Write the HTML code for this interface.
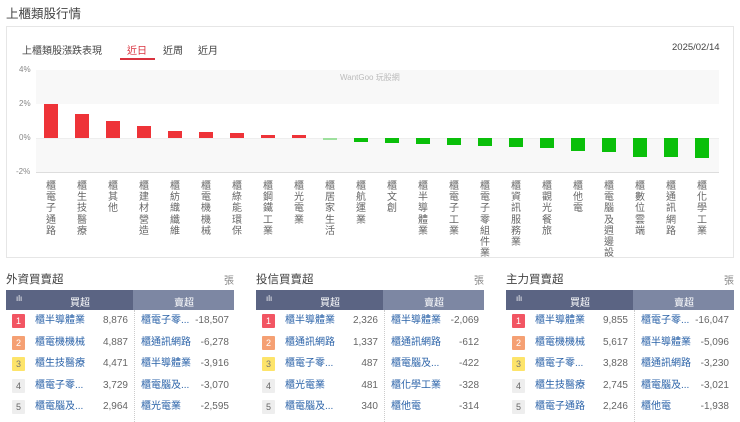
<!DOCTYPE html>
<html><head><meta charset="utf-8"><style>
*{margin:0;padding:0;box-sizing:border-box}
body{width:740px;height:422px;background:#fff;font-family:"Liberation Sans","Noto Sans CJK TC",sans-serif;position:relative;overflow:hidden;color:#333}
.abs{position:absolute}
.card{left:6px;top:26px;width:728px;height:232px;border:1px solid #e6e6e6;background:#fff}
.lbl{position:absolute;top:181px;width:12px;font-size:10px;line-height:11.2px;color:#666;text-align:center;word-break:break-all}
.ttl{font-size:11.5px;color:#444}
.panel{position:absolute;top:270px;width:228px;height:152px}
.panel .h{position:absolute;top:20px;height:20px;left:0;width:228px}
.row{position:absolute;left:0;width:228px;height:21.5px;font-size:10px;line-height:21.5px}
.rk{position:absolute;left:6px;top:4px;width:13px;height:14px;font-size:9px;line-height:14px;text-align:center;color:#fff;border-radius:1px}
.n1{position:absolute;left:29px;color:#2a62a8}
.v1{position:absolute;right:106px;color:#666}
.n2{position:absolute;left:135px;color:#2a62a8}
.v2{position:absolute;right:5px;color:#666}
.sep{position:absolute;left:128px;top:40px;width:0;height:112px;border-left:1px dotted #ccc}
</style></head><body>
<div class="abs" style="left:6px;top:3px;font-size:12.5px;color:#444">上櫃類股行情</div>
<div class="abs card"></div>
<div class="abs" style="left:22px;top:42px;font-size:10px;color:#444">上櫃類股漲跌表現</div>
<div class="abs" style="left:127px;top:42px;font-size:10px;color:#d9333f">近日</div>
<div class="abs" style="left:120px;top:58px;width:35px;height:2px;background:#d9333f"></div>
<div class="abs" style="left:163px;top:42px;font-size:10px;color:#444">近周</div>
<div class="abs" style="left:198px;top:42px;font-size:10px;color:#444">近月</div>
<div class="abs" style="left:672px;top:42px;font-size:9.5px;color:#444">2025/02/14</div>
<div class="abs" style="left:36px;top:70px;width:683px;height:34px;background:#f8f8f8"></div>
<div class="abs" style="left:36px;top:138px;width:683px;height:34px;background:#f8f8f8"></div>
<div class="abs" style="left:36px;top:172px;width:683px;height:1px;background:#ddd"></div>
<div class="abs" style="left:36px;top:138px;width:683px;height:1px;background:#eee"></div>
<div class="abs" style="left:19px;top:65px;font-size:8px;color:#888">4%</div>
<div class="abs" style="left:19px;top:99px;font-size:8px;color:#888">2%</div>
<div class="abs" style="left:19px;top:133px;font-size:8px;color:#888">0%</div>
<div class="abs" style="left:16px;top:167px;font-size:8px;color:#888">-2%</div>
<div class="abs" style="left:340px;top:72px;font-size:8px;color:#bbb">WantGoo 玩股網</div>
<div class="abs" style="left:44px;top:104px;width:14px;height:34px;background:#ee3338"></div>
<div class="abs" style="left:75px;top:114px;width:14px;height:24px;background:#ee3338"></div>
<div class="abs" style="left:106px;top:121px;width:14px;height:17px;background:#ee3338"></div>
<div class="abs" style="left:137px;top:126px;width:14px;height:12px;background:#ee3338"></div>
<div class="abs" style="left:168px;top:131px;width:14px;height:7px;background:#ee3338"></div>
<div class="abs" style="left:199px;top:132px;width:14px;height:6px;background:#ee3338"></div>
<div class="abs" style="left:230px;top:133px;width:14px;height:5px;background:#ee3338"></div>
<div class="abs" style="left:261px;top:135px;width:14px;height:3px;background:#ee3338"></div>
<div class="abs" style="left:292px;top:135px;width:14px;height:3px;background:#ee3338"></div>
<div class="abs" style="left:323px;top:138px;width:14px;height:1.5px;background:#9ee09e"></div>
<div class="abs" style="left:354px;top:138px;width:14px;height:4px;background:#0abf0a"></div>
<div class="abs" style="left:385px;top:138px;width:14px;height:5px;background:#0abf0a"></div>
<div class="abs" style="left:416px;top:138px;width:14px;height:6px;background:#0abf0a"></div>
<div class="abs" style="left:447px;top:138px;width:14px;height:7px;background:#0abf0a"></div>
<div class="abs" style="left:478px;top:138px;width:14px;height:8px;background:#0abf0a"></div>
<div class="abs" style="left:509px;top:138px;width:14px;height:9px;background:#0abf0a"></div>
<div class="abs" style="left:540px;top:138px;width:14px;height:10px;background:#0abf0a"></div>
<div class="abs" style="left:571px;top:138px;width:14px;height:13px;background:#0abf0a"></div>
<div class="abs" style="left:602px;top:138px;width:14px;height:14px;background:#0abf0a"></div>
<div class="abs" style="left:633px;top:138px;width:14px;height:19px;background:#0abf0a"></div>
<div class="abs" style="left:664px;top:138px;width:14px;height:19px;background:#0abf0a"></div>
<div class="abs" style="left:695px;top:138px;width:14px;height:20px;background:#0abf0a"></div>
<div class="lbl" style="left:45px">櫃電子通路</div>
<div class="lbl" style="left:76px">櫃生技醫療</div>
<div class="lbl" style="left:107px">櫃其他</div>
<div class="lbl" style="left:138px">櫃建材營造</div>
<div class="lbl" style="left:169px">櫃紡織纖維</div>
<div class="lbl" style="left:200px">櫃電機機械</div>
<div class="lbl" style="left:231px">櫃綠能環保</div>
<div class="lbl" style="left:262px">櫃鋼鐵工業</div>
<div class="lbl" style="left:293px">櫃光電業</div>
<div class="lbl" style="left:324px">櫃居家生活</div>
<div class="lbl" style="left:355px">櫃航運業</div>
<div class="lbl" style="left:386px">櫃文創</div>
<div class="lbl" style="left:417px">櫃半導體業</div>
<div class="lbl" style="left:448px">櫃電子工業</div>
<div class="lbl" style="left:479px">櫃電子零組件業</div>
<div class="lbl" style="left:510px">櫃資訊服務業</div>
<div class="lbl" style="left:541px">櫃觀光餐旅</div>
<div class="lbl" style="left:572px">櫃他電</div>
<div class="lbl" style="left:603px">櫃電腦及週邊設</div>
<div class="lbl" style="left:634px">櫃數位雲端</div>
<div class="lbl" style="left:665px">櫃通訊網路</div>
<div class="lbl" style="left:696px">櫃化學工業</div>

<div class="panel" style="left:6px">
<div class="ttl abs" style="left:0;top:1px">外資買賣超</div><div class="abs" style="right:0;top:2px;font-size:10px;color:#888">張</div>
<div class="h" style="background:#7d87a3"></div><div class="abs" style="left:0;top:20px;width:127px;height:20px;background:#5b6483"></div>
<div class="abs" style="left:10px;top:24px;font-size:8px;color:#fff">ılı</div>
<div class="abs" style="left:64px;top:24px;font-size:10px;color:#fff">買超</div><div class="abs" style="left:168px;top:24px;font-size:10px;color:#fff">賣超</div>
<div class="sep"></div>
<div class="row" style="top:40px"><span class="rk" style="background:#f25563">1</span><span class="n1">櫃半導體業</span><span class="v1">8,876</span><span class="n2">櫃電子零...</span><span class="v2">-18,507</span></div>
<div class="row" style="top:61.5px"><span class="rk" style="background:#f5a073">2</span><span class="n1">櫃電機機械</span><span class="v1">4,887</span><span class="n2">櫃通訊網路</span><span class="v2">-6,278</span></div>
<div class="row" style="top:83px"><span class="rk" style="background:#fde46a;color:#777">3</span><span class="n1">櫃生技醫療</span><span class="v1">4,471</span><span class="n2">櫃半導體業</span><span class="v2">-3,916</span></div>
<div class="row" style="top:104.5px"><span class="rk" style="background:#eee;color:#666">4</span><span class="n1">櫃電子零...</span><span class="v1">3,729</span><span class="n2">櫃電腦及...</span><span class="v2">-3,070</span></div>
<div class="row" style="top:126px"><span class="rk" style="background:#eee;color:#666">5</span><span class="n1">櫃電腦及...</span><span class="v1">2,964</span><span class="n2">櫃光電業</span><span class="v2">-2,595</span></div>
</div>
<div class="panel" style="left:256px">
<div class="ttl abs" style="left:0;top:1px">投信買賣超</div><div class="abs" style="right:0;top:2px;font-size:10px;color:#888">張</div>
<div class="h" style="background:#7d87a3"></div><div class="abs" style="left:0;top:20px;width:127px;height:20px;background:#5b6483"></div>
<div class="abs" style="left:10px;top:24px;font-size:8px;color:#fff">ılı</div>
<div class="abs" style="left:64px;top:24px;font-size:10px;color:#fff">買超</div><div class="abs" style="left:168px;top:24px;font-size:10px;color:#fff">賣超</div>
<div class="sep"></div>
<div class="row" style="top:40px"><span class="rk" style="background:#f25563">1</span><span class="n1">櫃半導體業</span><span class="v1">2,326</span><span class="n2">櫃半導體業</span><span class="v2">-2,069</span></div>
<div class="row" style="top:61.5px"><span class="rk" style="background:#f5a073">2</span><span class="n1">櫃通訊網路</span><span class="v1">1,337</span><span class="n2">櫃通訊網路</span><span class="v2">-612</span></div>
<div class="row" style="top:83px"><span class="rk" style="background:#fde46a;color:#777">3</span><span class="n1">櫃電子零...</span><span class="v1">487</span><span class="n2">櫃電腦及...</span><span class="v2">-422</span></div>
<div class="row" style="top:104.5px"><span class="rk" style="background:#eee;color:#666">4</span><span class="n1">櫃光電業</span><span class="v1">481</span><span class="n2">櫃化學工業</span><span class="v2">-328</span></div>
<div class="row" style="top:126px"><span class="rk" style="background:#eee;color:#666">5</span><span class="n1">櫃電腦及...</span><span class="v1">340</span><span class="n2">櫃他電</span><span class="v2">-314</span></div>
</div>
<div class="panel" style="left:506px">
<div class="ttl abs" style="left:0;top:1px">主力買賣超</div><div class="abs" style="right:0;top:2px;font-size:10px;color:#888">張</div>
<div class="h" style="background:#7d87a3"></div><div class="abs" style="left:0;top:20px;width:127px;height:20px;background:#5b6483"></div>
<div class="abs" style="left:10px;top:24px;font-size:8px;color:#fff">ılı</div>
<div class="abs" style="left:64px;top:24px;font-size:10px;color:#fff">買超</div><div class="abs" style="left:168px;top:24px;font-size:10px;color:#fff">賣超</div>
<div class="sep"></div>
<div class="row" style="top:40px"><span class="rk" style="background:#f25563">1</span><span class="n1">櫃半導體業</span><span class="v1">9,855</span><span class="n2">櫃電子零...</span><span class="v2">-16,047</span></div>
<div class="row" style="top:61.5px"><span class="rk" style="background:#f5a073">2</span><span class="n1">櫃電機機械</span><span class="v1">5,617</span><span class="n2">櫃半導體業</span><span class="v2">-5,096</span></div>
<div class="row" style="top:83px"><span class="rk" style="background:#fde46a;color:#777">3</span><span class="n1">櫃電子零...</span><span class="v1">3,828</span><span class="n2">櫃通訊網路</span><span class="v2">-3,230</span></div>
<div class="row" style="top:104.5px"><span class="rk" style="background:#eee;color:#666">4</span><span class="n1">櫃生技醫療</span><span class="v1">2,745</span><span class="n2">櫃電腦及...</span><span class="v2">-3,021</span></div>
<div class="row" style="top:126px"><span class="rk" style="background:#eee;color:#666">5</span><span class="n1">櫃電子通路</span><span class="v1">2,246</span><span class="n2">櫃他電</span><span class="v2">-1,938</span></div>
</div>
</body></html>
